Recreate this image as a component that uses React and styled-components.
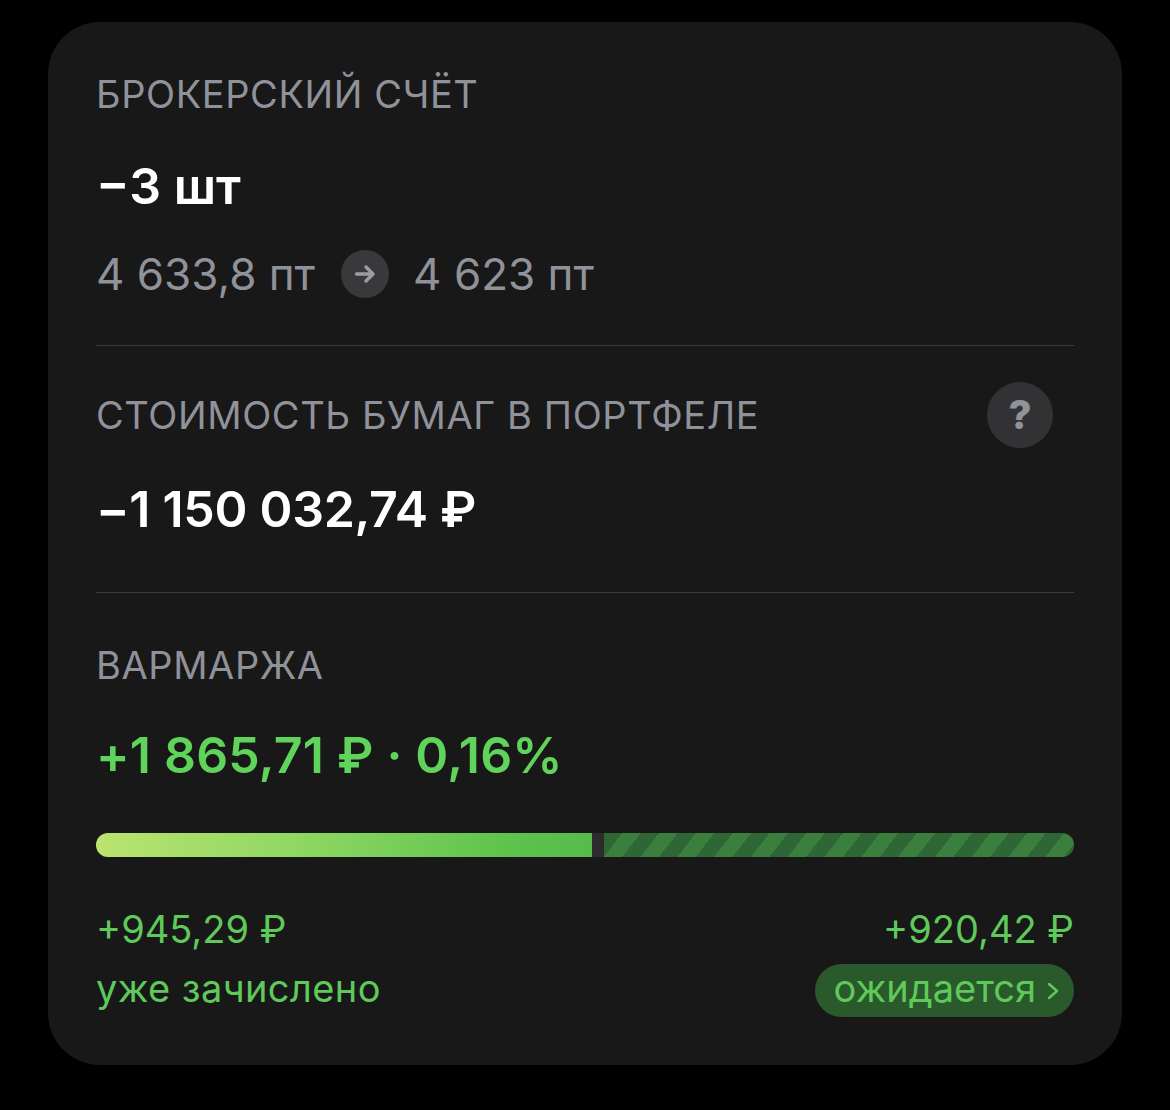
import React from 'react'
import styled, { createGlobalStyle } from 'styled-components'

const GlobalStyle = createGlobalStyle`
  html, body {
    margin: 0;
    background: #000;
    font-family: Inter, "Liberation Sans", sans-serif;
  }
`

function App() {
  return (
    <>
      <GlobalStyle />
      <Page>
        <Card>
          <TopSection>
            <Label>БРОКЕРСКИЙ СЧЁТ</Label>
            <Quantity>−3 шт</Quantity>
            <PriceRow>
              <Price>4 633,8 пт</Price>
              <ArrowBadge>
                <svg width="24" height="24" viewBox="0 0 24 24" fill="none" stroke="#9a9da3" strokeWidth="3.4" strokeLinecap="round" strokeLinejoin="round">
                  <path d="M3.5 12h16" />
                  <path d="M13 5l7 7-7 7" />
                </svg>
              </ArrowBadge>
              <Price>4 623 пт</Price>
            </PriceRow>
          </TopSection>

          <ValueSection>
            <LabelRow>
              <Label>СТОИМОСТЬ БУМАГ В ПОРТФЕЛЕ</Label>
              <HelpButton>?</HelpButton>
            </LabelRow>
            <Amount>−1 150 032,74 ₽</Amount>
          </ValueSection>

          <MarginSection>
            <Label>ВАРМАРЖА</Label>
            <Amount $green $top={40}>+1 865,71 ₽ · 0,16%</Amount>
            <Progress>
              <ProgressDone />
              <ProgressPending />
            </Progress>
            <Footer>
              <FooterColumn>
                <Small>+945,29 ₽</Small>
                <Caption>уже зачислено</Caption>
              </FooterColumn>
              <FooterColumn $right>
                <Small>+920,42 ₽</Small>
                <Pill>
                  ожидается
                  <Chevron width="14" height="20" viewBox="0 0 14 20" fill="none" stroke="#5fc95a" strokeWidth="2.4" strokeLinecap="round" strokeLinejoin="round">
                    <path d="M3 3l8 7-8 7" />
                  </Chevron>
                </Pill>
              </FooterColumn>
            </Footer>
          </MarginSection>
        </Card>
      </Page>
    </>
  )
}

export default App

const Page = styled.div`
  width: 1170px;
  height: 1110px;
  padding: 22px 48px 45px;
  box-sizing: border-box;
`

const Card = styled.div`
  height: 1043px;
  box-sizing: border-box;
  padding: 0 48px;
  background: #181819;
  border-radius: 52px;
`

const TopSection = styled.section`
  padding: 50px 0 47px;
  border-bottom: 1px solid #3a3a3c;
`

const ValueSection = styled.section`
  padding: 36px 0 54px;
  border-bottom: 1px solid #3a3a3c;
`

const MarginSection = styled.section`
  padding-top: 50px;
`

const Label = styled.div`
  height: 44px;
  line-height: 44px;
  font-size: 38px;
  letter-spacing: 0.6px;
  font-weight: 400;
  color: #909299;
  white-space: nowrap;
`

const LabelRow = styled.div`
  display: flex;
  align-items: center;
  justify-content: space-between;
  height: 66px;
  padding-right: 21px;
`

const HelpButton = styled.div`
  width: 66px;
  height: 66px;
  border-radius: 50%;
  background: #323234;
  color: #909299;
  font-size: 40px;
  font-weight: 800;
  line-height: 66px;
  text-align: center;
`

const Quantity = styled.div`
  margin-top: 43px;
  height: 56px;
  line-height: 54px;
  font-size: 50px;
  font-weight: 600;
  color: #fff;
`

const PriceRow = styled.div`
  display: flex;
  align-items: center;
  margin-top: 35px;
  height: 48px;
`

const Price = styled.span`
  font-size: 44px;
  color: #909299;
  white-space: nowrap;
`

const ArrowBadge = styled.span`
  display: flex;
  align-items: center;
  justify-content: center;
  width: 48px;
  height: 48px;
  margin: 0 24px 0 26px;
  border-radius: 50%;
  background: #39393b;
`

const Amount = styled.div`
  margin-top: ${props => props.$top || 34}px;
  height: 56px;
  line-height: ${props => (props.$green ? 56 : 54)}px;
  font-size: 50px;
  font-weight: 600;
  letter-spacing: ${props => (props.$green ? '0.2px' : '-0.3px')};
  color: ${props => (props.$green ? '#5fd35a' : '#fff')};
  white-space: nowrap;
`

const Progress = styled.div`
  display: flex;
  gap: 12px;
  height: 24px;
  margin-top: 50px;
  background: #2c2c2e;
  border-radius: 12px;
  overflow: hidden;
`

const ProgressDone = styled.div`
  flex: 0 0 496px;
  background: linear-gradient(90deg, #bbe36f 0%, #8fd863 40%, #5cc24c 85%, #56bb4a 100%);
`

const ProgressPending = styled.div`
  flex: 1;
  background: repeating-linear-gradient(128deg, #2f6635 0 14.5px, #3b7f3f 14.5px 29px);
`

const Footer = styled.div`
  display: flex;
  justify-content: space-between;
  margin-top: 50px;
`

const FooterColumn = styled.div`
  display: flex;
  flex-direction: column;
  align-items: ${props => (props.$right ? 'flex-end' : 'flex-start')};
  gap: 13px;
`

const Small = styled.div`
  height: 44px;
  line-height: 44px;
  font-size: 38px;
  color: #5fc95a;
  white-space: nowrap;
`

const Caption = styled(Small)`
  height: 53px;
  line-height: 48px;
  letter-spacing: 0.4px;
`

const Pill = styled.div`
  display: flex;
  align-items: center;
  gap: 10px;
  height: 53px;
  padding: 0 14px 5px 19px;
  box-sizing: border-box;
  border-radius: 27px;
  background: #2a5a2b;
  font-size: 38px;
  color: #5fc95a;
  white-space: nowrap;
`

const Chevron = styled.svg`
  margin-top: 5px;
`
